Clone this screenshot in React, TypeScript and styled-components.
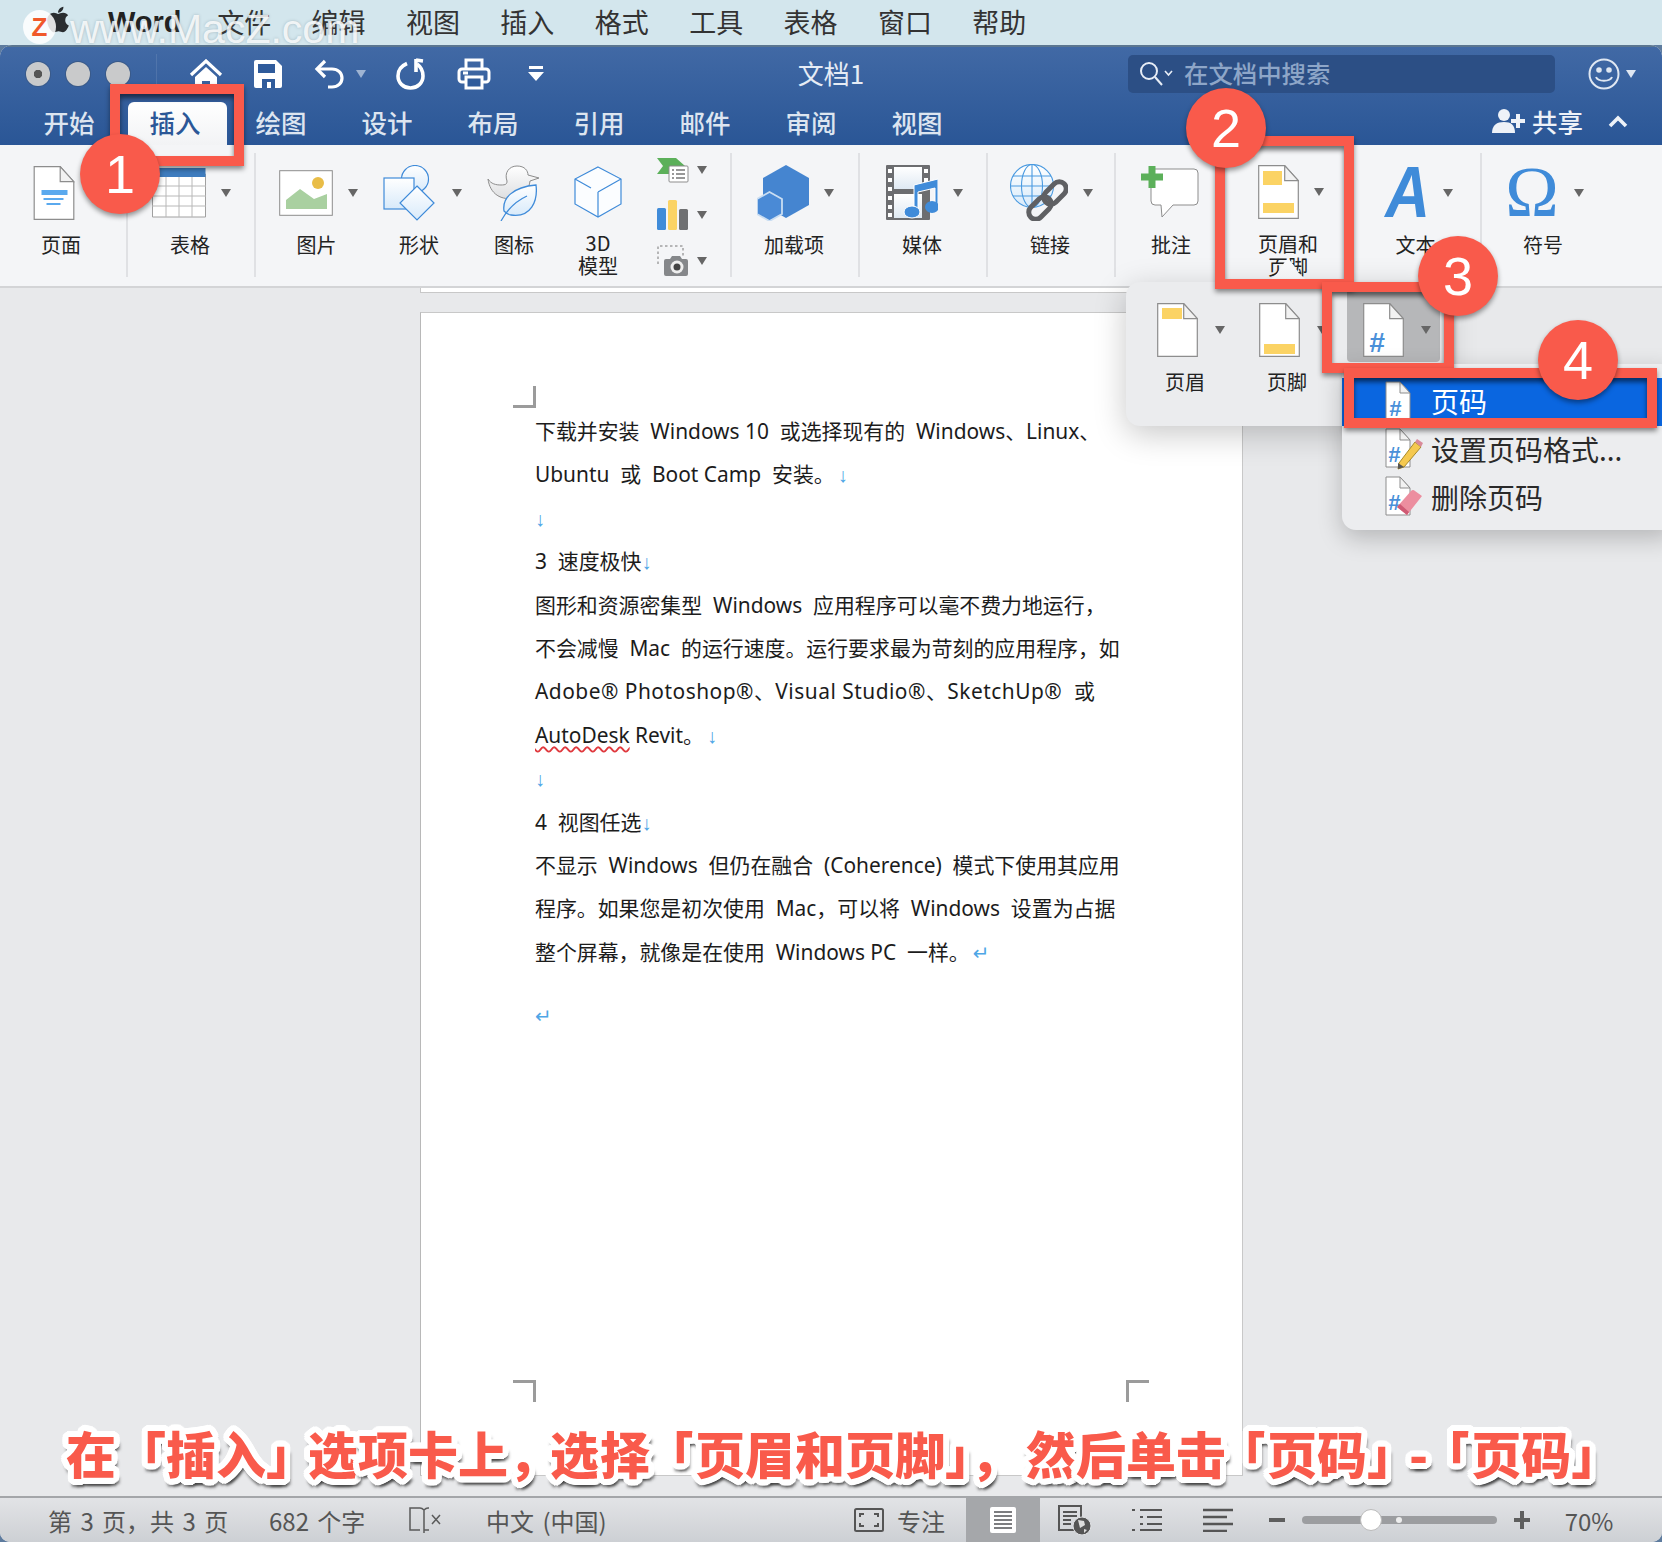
import React from 'react'
import styled, { createGlobalStyle } from 'styled-components'
import { FaApple } from 'react-icons/fa'

const cjk = `"Noto Sans CJK SC", "Noto Sans", sans-serif`
const docFont = `"Noto Sans", "Noto Sans CJK SC", sans-serif`
const red = '#f95a4b'

const Global = createGlobalStyle`
  html, body { margin: 0; padding: 0; background: #5d7b9e; }
  * { box-sizing: border-box; }
`

const Screen = styled.div`
  position: relative;
  width: 1662px;
  height: 1542px;
  overflow: hidden;
  display: flex;
  flex-direction: column;
  font-family: ${cjk};
`

const MenuBar = styled.div`
  height: 45px;
  flex: none;
  display: flex;
  align-items: center;
  padding: 0 0 3px 197px;
  background: #d3e6ed;
  color: #333;
  font-size: 27px;
`

const AppName = styled.span`
  position: absolute;
  left: 108px;
  top: 3px;
  font: bold 29px "Liberation Sans", sans-serif;
  line-height: 38px;
  color: #222;
`

const MenuItem = styled.span`
  width: 94.4px;
  text-align: center;
`

const Watermark = styled.span`
  position: absolute;
  left: 70px;
  top: 5px;
  font: 41px/48px "Liberation Sans", sans-serif;
  color: rgba(255, 255, 255, 0.82);
  text-shadow: 0 0 3px rgba(110, 130, 140, 0.45);
`

const LogoDisc = styled.div`
  position: absolute;
  left: 23px;
  top: 10px;
  width: 33px;
  height: 34px;
  border-radius: 50%;
  background: rgba(255, 255, 255, 0.85);
  color: #f0592b;
  font: bold 26px/34px "Liberation Sans", sans-serif;
  text-align: center;
`

const AppleMark = styled(FaApple)`
  position: absolute;
  left: 47px;
  top: 3px;
  width: 22px;
  height: 33px;
  color: #2a2d30;
`

const Frame = styled.div`
  flex: 1;
  display: flex;
  flex-direction: column;
  border-radius: 12px 12px 10px 10px;
  overflow: hidden;
  background: #e8e9eb;
`

const Header = styled.div`
  height: 100px;
  flex: none;
  background: linear-gradient(#4169a5, #2a5696);
  border-top: 2px solid #5b7690;
`

const TitleBar = styled.div`
  height: 53px;
  display: flex;
  align-items: center;
  padding-left: 26px;
`

const Lights = styled.div`
  display: flex;
  align-items: center;
  gap: 16px;
  width: 131px;
  height: 40px;
  margin-right: 18px;
  border-right: 1px solid rgba(255, 255, 255, 0.1);
`

const Light = styled.span<{ $dot?: boolean }>`
  width: 24px;
  height: 24px;
  border-radius: 50%;
  background: ${(p) =>
    p.$dot ? 'radial-gradient(circle, #555 0 4px, #c9cacb 4.5px)' : '#c9cacb'};
  box-shadow: 0 0 0 1px #3a5a88;
`

const QatCell = styled.div<{ $w: number }>`
  width: ${(p) => p.$w}px;
  height: 40px;
  display: flex;
  align-items: center;
  justify-content: center;
  gap: 10px;
`

const DocTitle = styled.div`
  width: 528px;
  padding-bottom: 3px;
  text-align: center;
  color: #e6ecf5;
  font-size: 26px;
`

const SearchBox = styled.div`
  width: 427px;
  height: 38px;
  margin-left: 33px;
  display: flex;
  align-items: center;
  gap: 11px;
  padding-left: 11px;
  border-radius: 5px;
  background: #2c4f85;
  color: #8ea6c8;
  font-size: 24.4px;
  font-weight: 500;
`

const SearchLabel = styled.span`
  padding-bottom: 3px;
`

const SmileCell = styled.div`
  margin-left: 33px;
  display: flex;
  align-items: center;
  gap: 6px;
`

const Tabs = styled.div`
  height: 45px;
  display: flex;
  align-items: center;
  padding-left: 16px;
  padding-right: 34px;
  color: #dde5f0;
  font-size: 25.5px;
  font-weight: 500;
`

const Tab = styled.div<{ $active?: boolean }>`
  position: relative;
  width: 106px;
  height: 45px;
  line-height: 43px;
  text-align: center;
  color: ${(p) => (p.$active ? '#2b5797' : 'inherit')};
  z-index: 0;
  &::before {
    content: '';
    display: ${(p) => (p.$active ? 'block' : 'none')};
    position: absolute;
    left: 6px;
    right: 1px;
    top: 2px;
    bottom: 0;
    z-index: -1;
    border-radius: 6px 6px 0 0;
    background: linear-gradient(#fff, #f2f3f5);
  }
`

const Share = styled.div`
  margin-left: auto;
  display: flex;
  align-items: center;
  padding-bottom: 4px;
  color: #eef2f8;
`

const ShareLabel = styled.span`
  margin: 0 25px 0 6px;
`

const Ribbon = styled.div`
  height: 143px;
  flex: none;
  display: flex;
  background: #f4f5f7;
  border-bottom: 2px solid #d3d4d6;
`

const Group = styled.div<{ $w: number; $last?: boolean }>`
  width: ${(p) => p.$w}px;
  margin: 8px 0 9px;
  display: flex;
  border-right: ${(p) => (p.$last ? 'none' : '2px solid #e0e1e4')};
`

const ToolButton = styled.div<{ $w: number }>`
  width: ${(p) => p.$w}px;
  flex: none;
  display: flex;
  flex-direction: column;
  align-items: center;
  padding-top: 12px;
`

const IconRow = styled.div<{ $nudge?: number }>`
  height: 55px;
  display: flex;
  align-items: center;
  gap: 15px;
  margin-left: ${(p) => p.$nudge ?? 0}px;
`

const ToolLabel = styled.div`
  margin-top: 13px;
  font-size: 20px;
  line-height: 23px;
  color: #222;
  text-align: center;
  white-space: pre-line;
`

const Caret = styled.span<{ $tone?: string }>`
  flex: none;
  width: 0;
  height: 0;
  border-left: 5.5px solid transparent;
  border-right: 5.5px solid transparent;
  border-top: 8px solid ${(p) => p.$tone ?? '#666'};
`

const MiniColumn = styled.div`
  width: 103px;
  padding-left: 28px;
  display: flex;
  flex-direction: column;
  gap: 12.5px;
`

const MiniRow = styled.div`
  height: 34px;
  display: flex;
  align-items: center;
  gap: 8px;
`

const LetterA = styled.span`
  display: block;
  width: 46px;
  text-align: center;
  color: #3f8bd9;
  font: italic 700 72px/55px "Liberation Sans", sans-serif;
  transform: scaleX(0.86);
`

const LetterOmega = styled.span`
  color: #3f8bd9;
  font: 72px/55px "Liberation Serif", serif;
`

const Workspace = styled.div`
  flex: 1;
  display: flex;
  flex-direction: column;
  padding: 0 0 20px 420px;
  background: #e8e9eb;
`

const PrevPage = styled.div`
  width: 823px;
  height: 5px;
  flex: none;
  background: #fff;
  border-left: 1px solid #c8c8c8;
  border-right: 1px solid #c8c8c8;
  border-bottom: 1px solid #c8c8c8;
`

const Page = styled.div`
  width: 823px;
  flex: 1;
  margin-top: 19px;
  padding: 73px 93px 73px 92px;
  display: flex;
  flex-direction: column;
  background: #fff;
  border: 1px solid #c8c8c8;
  border-left-color: #b8b8b8;
`

const CropRow = styled.div<{ $bottom?: boolean }>`
  display: flex;
  justify-content: space-between;
  margin-top: ${(p) => (p.$bottom ? 'auto' : '0')};
`

const CropMark = styled.span<{ $side: 'top' | 'bottomLeft' | 'bottomRight' }>`
  width: 23px;
  height: 22px;
  border: 0 solid #9b9b9b;
  border-bottom-width: ${(p) => (p.$side === 'top' ? 3 : 0)}px;
  border-top-width: ${(p) => (p.$side === 'top' ? 0 : 3)}px;
  border-right-width: ${(p) => (p.$side === 'bottomRight' ? 0 : 3)}px;
  border-left-width: ${(p) => (p.$side === 'bottomRight' ? 3 : 0)}px;
`

const Body = styled.div`
  margin: 2px 0 0 22px;
  font-family: ${docFont};
  font-size: 20.9px;
  line-height: 43.4px;
  color: #1c1c1c;
  white-space: pre;
`

const Line = styled.div<{ $gap?: number; $track?: number }>`
  height: 43.4px;
  margin-top: ${(p) => p.$gap ?? 0}px;
  letter-spacing: ${(p) => p.$track ?? 0}px;
`

const Mark = styled.span<{ $bare?: boolean }>`
  margin-left: ${(p) => (p.$bare ? 0 : 3)}px;
  color: #4ea6e6;
  font-family: "Liberation Sans", "DejaVu Sans", sans-serif;
  font-size: 20px;
`

const Squiggle = styled.span`
  text-decoration: underline wavy #e0393e;
  text-decoration-thickness: 1.5px;
  text-underline-offset: 3px;
`

const Popover = styled.div`
  position: absolute;
  left: 1126px;
  top: 282px;
  width: 319px;
  height: 144px;
  padding-left: 8px;
  display: flex;
  background: #ebecee;
  border-radius: 14px;
  box-shadow: 0 8px 32px rgba(0, 0, 0, 0.22);
  &::before {
    content: '';
    position: absolute;
    left: 137px;
    top: -24px;
    width: 50px;
    height: 25px;
    background: linear-gradient(#fbfbfc, #eeeff1);
    clip-path: polygon(50% 0, 60% 25%, 72% 62%, 84% 84%, 100% 100%, 0 100%, 16% 84%, 28% 62%, 40% 25%);
  }
`

const PopButton = styled.div<{ $w: number; $active?: boolean }>`
  width: ${(p) => p.$w}px;
  height: ${(p) => (p.$active ? 80 : 144)}px;
  margin-left: ${(p) => (p.$active ? 9 : 0)}px;
  padding: 21px 0 0 ${(p) => (p.$active ? 16 : 23)}px;
  background: ${(p) => (p.$active ? '#b6b7b9' : 'transparent')};
  border-radius: 0 0 4px 4px;
`

const PopIcons = styled.div`
  display: flex;
  align-items: center;
  gap: 17px;
`

const PopLabel = styled.div`
  margin: 11px 0 0 -23px;
  font-size: 20px;
  line-height: 27px;
  color: #222;
  text-align: center;
`

const DropMenu = styled.div`
  position: absolute;
  left: 1342px;
  top: 364px;
  width: 330px;
  height: 166px;
  padding-top: 14px;
  background: #ecedef;
  border-radius: 0 0 0 14px;
  box-shadow: 0 8px 24px rgba(0, 0, 0, 0.22);
`

const DropRow = styled.div<{ $selected?: boolean }>`
  height: 48px;
  display: flex;
  align-items: center;
  gap: 8px;
  padding: 0 0 2px 43px;
  font-size: 28px;
  background: ${(p) => (p.$selected ? '#0a66e0' : 'transparent')};
  color: ${(p) => (p.$selected ? '#fff' : '#2a2a2a')};
`

const RedBox = styled.div<{ $x: number; $y: number; $w: number; $h: number }>`
  position: absolute;
  left: ${(p) => p.$x}px;
  top: ${(p) => p.$y}px;
  width: ${(p) => p.$w}px;
  height: ${(p) => p.$h}px;
  border: 10px solid ${red};
  box-shadow: 0 3px 5px rgba(0, 0, 0, 0.45), inset 0 4px 5px rgba(0, 0, 0, 0.55);
`

const Badge = styled.div<{ $x: number; $y: number }>`
  position: absolute;
  left: ${(p) => p.$x}px;
  top: ${(p) => p.$y}px;
  width: 80px;
  height: 80px;
  border-radius: 50%;
  background: ${red};
  box-shadow: 0 3px 5px rgba(0, 0, 0, 0.4);
  color: #fff;
  font: 54px/80px "Liberation Sans", sans-serif;
  text-align: center;
`

const outline = (() => {
  const parts: string[] = []
  for (let i = 0; i < 24; i++) {
    const a = (i / 24) * Math.PI * 2
    parts.push(`${(Math.cos(a) * 6).toFixed(1)}px ${(Math.sin(a) * 6).toFixed(1)}px 0 #fff`)
  }
  parts.push('3px 8px 3px rgba(60,60,60,.8)', '-2px 8px 3px rgba(60,60,60,.65)', '6px 6px 3px rgba(60,60,60,.65)')
  return parts.join(',')
})()

const Caption = styled.div`
  position: absolute;
  left: 66px;
  top: 1417px;
  font-size: 50px;
  line-height: 70px;
  font-weight: 900;
  color: ${red};
  white-space: pre;
  text-shadow: ${outline};
`

const Pull = styled.span<{ $px: number }>`
  margin-left: ${(p) => p.$px}px;
`

const StatusBar = styled.div`
  height: 46px;
  flex: none;
  display: flex;
  align-items: center;
  padding-left: 48px;
  background: linear-gradient(#e2e3e6, #cdd0d4);
  border-top: 2px solid #a4a6a9;
  color: #555;
  font-size: 24px;
  word-spacing: 3px;
`

const StatusCell = styled.div<{ $w: number; $active?: boolean; $center?: boolean }>`
  width: ${(p) => p.$w}px;
  height: 100%;
  flex: none;
  display: flex;
  align-items: center;
  justify-content: ${(p) => (p.$center ? 'center' : 'flex-start')};
  white-space: pre;
  background: ${(p) => (p.$active ? '#a5a7aa' : 'transparent')};
`

const ZoomTrack = styled.div`
  position: relative;
  width: 195px;
  height: 8px;
  flex: none;
  border-radius: 4px;
  background: #9c9da0;
`

const ZoomDot = styled.span`
  position: absolute;
  left: 94px;
  top: 1px;
  width: 6px;
  height: 6px;
  border-radius: 50%;
  background: #eee;
`

const ZoomKnob = styled.span`
  position: absolute;
  left: 58px;
  top: -7px;
  width: 22px;
  height: 22px;
  border-radius: 50%;
  background: #fff;
  border: 1px solid #bbb;
`

const blue = '#4a90d9'
const yellow = '#fbd364'

type Sized = { w?: number; h?: number; children?: React.ReactNode }

const Tint = ({ id, to = '#d8eafa' }: { id: string; to?: string }) => (
  <defs>
    <linearGradient id={id} x1="0" y1="0" x2="0" y2="1">
      <stop offset="0" stopColor="#fff" />
      <stop offset="1" stopColor={to} />
    </linearGradient>
  </defs>
)

const Doc = ({ w = 41, h = 54, children }: Sized) => (
  <svg width={w} height={h} viewBox="0 0 41 54">
    <path d="M.7.7h26l13.6 15v37.6H.7z" fill="#fff" stroke="#8d8d8d" strokeWidth="1.2" />
    {children}
    <path d="M26.7.7v15h13.6z" fill="#f2f2f2" stroke="#8d8d8d" strokeWidth="1.2" />
  </svg>
)

const HashText = ({ size = 24, x = 5, y = 49 }: { size?: number; x?: number; y?: number }) => (
  <text x={x} y={y} fontFamily="Liberation Sans" fontStyle="italic" fontWeight="700" fontSize={size} fill={blue}>
    #
  </text>
)

const HomeIcon = () => (
  <svg width="34" height="30" viewBox="0 0 34 30">
    <path d="M2 16 17 2l15 14" fill="none" stroke="#fff" strokeWidth="3.2" />
    <path d="M6 18 17 8l11 10v12h-7v-8h-8v8H6z" fill="#fff" />
  </svg>
)

const SaveIcon = () => (
  <svg width="28" height="28" viewBox="0 0 28 28">
    <path d="M2 0h20l6 6v20a2 2 0 0 1-2 2H2a2 2 0 0 1-2-2V2a2 2 0 0 1 2-2z" fill="#fff" />
    <path d="M4 4h17v9H4z" fill="#2f5b9b" />
    <path d="M8 19h13v9H8z" fill="#2f5b9b" />
    <path d="M13 22h4v6h-4z" fill="#fff" />
  </svg>
)

const UndoIcon = () => (
  <svg width="32" height="30" viewBox="0 0 32 30" fill="none" stroke="#fff" strokeWidth="3.2">
    <path d="M11 2 3 10l8 8" />
    <path d="M4 10h14c6 0 10 4 10 9s-4 9-10 9h-4" />
  </svg>
)

const RedoIcon = () => (
  <svg width="30" height="32" viewBox="0 0 30 32" fill="none" stroke="#fff" strokeWidth="3.6">
    <path d="M11 5.500C5 8 2 13 2 18c0 7 5.600 12 12.500 12S27 25 27 18c0-5-2-9-6-12" />
    <path d="M20 1v13" />
    <path d="m20 2 7 1" />
  </svg>
)

const PrintIcon = () => (
  <svg width="34" height="32" viewBox="0 0 34 32" fill="none" stroke="#fff" strokeWidth="3">
    <path d="M9 11V2h16v9" />
    <rect x="2" y="11" width="30" height="13" rx="3" />
    <path d="M9 19h16v11H9z" fill="#2f5b9b" />
    <path d="M6 15h5" />
  </svg>
)

const CustomizeIcon = () => (
  <svg width="16" height="16" viewBox="0 0 16 16" fill="#fff">
    <path d="M1 0h14v3H1zM0 6h16l-8 9z" />
  </svg>
)

const SearchGlass = () => (
  <svg width="34" height="26" viewBox="0 0 34 26" fill="none" stroke="#e7edf6" strokeWidth="2">
    <circle cx="10" cy="10" r="8" />
    <path d="m16 16 7 8" />
    <path d="m26 10 3.500 4 3.500-4" strokeWidth="1.600" />
  </svg>
)

const SmileIcon = () => (
  <svg width="32" height="32" viewBox="0 0 32 32" fill="none" stroke="#dfe7f2" strokeWidth="2">
    <circle cx="16" cy="16" r="14.500" />
    <circle cx="11" cy="12" r="1.800" fill="#dfe7f2" />
    <circle cx="21" cy="12" r="1.800" fill="#dfe7f2" />
    <path d="M8 19c2 5 14 5 16 0" />
  </svg>
)

const ShareIcon = () => (
  <svg width="34" height="26" viewBox="0 0 34 26" fill="#eef2f8">
    <circle cx="12" cy="7" r="6" />
    <path d="M0 25c0-8 5-11 12-11s11 3 11 11z" />
    <path d="M24 6h4v5h5v4h-5v5h-4v-5h-5v-4h5z" />
  </svg>
)

const Chevron = () => (
  <svg width="20" height="14" viewBox="0 0 20 14" fill="none" stroke="#eef2f8" strokeWidth="3.600">
    <path d="m2 12 8-8 8 8" />
  </svg>
)

const PageIcon = () => (
  <Doc w={42} h={54}>
    <path d="M8 24h26v5H8z" fill="#5aa9ee" />
    <path d="M10 32h20v2H10zM13 37h14v2H13z" fill="#5aa9ee" />
  </Doc>
)

const TableIcon = () => (
  <svg width="54" height="50" viewBox="0 0 54 50">
    <path d="M.5 6h53v43H.5z" fill="#fff" stroke="#a0a0a0" />
    <path d="M.5 0h53v9H.5z" fill="#3e7cbe" />
    <path d="M0 18h54M0 28h54M0 38h54M14 9v40M27 9v40M40 9v40" stroke="#b8b8b8" />
  </svg>
)

const PictureIcon = () => (
  <svg width="54" height="46" viewBox="0 0 54 46">
    <rect x=".7" y=".7" width="52.600" height="44.600" fill="#fff" stroke="#8d8d8d" />
    <circle cx="39" cy="13" r="6" fill="#e9bd47" />
    <path d="M7 39v-9l14-11 14 10 13-5v15z" fill="#a9d0a0" />
  </svg>
)

const ShapesIcon = () => (
  <svg width="54" height="56" viewBox="0 0 54 56" stroke="#3f8bd9" strokeWidth="1.200">
    <Tint id="shapeTint" />
    <circle cx="32" cy="14" r="13.500" fill="url(#shapeTint)" />
    <rect x="1" y="13" width="30" height="31" fill="url(#shapeTint)" />
    <path d="m34 21 17 17-17 17-17-17z" fill="url(#shapeTint)" />
  </svg>
)

const DuckIcon = () => (
  <svg width="54" height="56" viewBox="0 0 54 56">
    <Tint id="duckTint" to="#dedfe1" />
    <Tint id="leafTint" />
    <path
      d="M1 14c3 5 8 6 13 6 5 0 6-1 6-4-3-8 2-15 10-15s11 5 11 9l11 3-9 3c-1 8-5 14-14 17-15 3-26-4-28-19z"
      fill="url(#duckTint)"
      stroke="#8c8c8c"
    />
    <path
      d="M17 46c-2-13 9-24 32-26 2 16-5 33-25 30-3 0-5-2-7-4z"
      fill="url(#leafTint)"
      stroke="#3f8bd9"
      strokeWidth="1.300"
    />
    <path d="M14 56c6-11 15-20 26-25" stroke="#3f8bd9" strokeWidth="1.300" fill="none" />
  </svg>
)

const CubeIcon = () => (
  <svg width="48" height="52" viewBox="0 0 48 52" fill="#fbfdff" stroke="#3f8bd9" strokeWidth="1.200">
    <path d="M24 1 47 13v25L24 51 1 38V13z" />
    <path d="M1 13 17 22M24 26l23-13M24 26v25" fill="none" />
  </svg>
)

const ListIcon = () => (
  <svg width="32" height="26" viewBox="0 0 32 26">
    <path d="M0 1h19l9 8-9 8H0l6-8z" fill="#5cb05a" />
    <rect x="12" y="9" width="19" height="16" rx="1" fill="#fff" stroke="#8d8d8d" />
    <path d="M15 13h2M19 13h9M15 17h2M19 17h9M15 21h2M19 21h9" stroke="#777" strokeWidth="1.300" />
  </svg>
)

const BarsIcon = () => (
  <svg width="32" height="30" viewBox="0 0 32 30">
    <rect x="0" y="8" width="9" height="22" rx="1.500" fill="#3f8bd9" />
    <rect x="11" y="0" width="9" height="30" rx="1.500" fill="#fbd364" />
    <rect x="22" y="9" width="9" height="21" rx="1.500" fill="#6f7072" />
  </svg>
)

const CameraIcon = () => (
  <svg width="32" height="31" viewBox="0 0 32 31">
    <path d="M1 19V1h25v11" fill="none" stroke="#777" strokeDasharray="2.500 2.500" />
    <path d="M7 16a2 2 0 0 1 2-2h4l2-3h8l2 3h4a2 2 0 0 1 2 2v13a2 2 0 0 1-2 2H9a2 2 0 0 1-2-2z" fill="#85878a" />
    <circle cx="20" cy="22" r="6.500" fill="#eee" />
    <circle cx="20" cy="22" r="3.500" fill="#444" />
  </svg>
)

const AddinIcon = () => (
  <svg width="52" height="56" viewBox="0 0 52 56">
    <path d="M29 0 52 13v27L29 53 6 40V13z" fill="#4585d0" />
    <path d="M12.500 27 25 34v15l-12.500 7L0 49V34z" fill="#4a8ad6" stroke="#c9ddf2" strokeWidth="1.800" />
  </svg>
)

const MediaIcon = () => (
  <svg width="52" height="56" viewBox="0 0 52 56">
    <Tint id="filmTint" to="#dfe9f3" />
    <rect x="0" y="0" width="44" height="55" rx="1" fill="#6c6d70" />
    <rect x="8" y="2" width="28" height="22" fill="url(#filmTint)" />
    <rect x="8" y="29" width="28" height="24" fill="url(#filmTint)" />
    <path d="M2 4h4v4H2zM2 13h4v4H2zM2 22h4v4H2zM2 31h4v4H2zM2 40h4v4H2zM2 48h4v4H2zM38 4h4v4h-4zM38 13h4v4h-4z" fill="#fff" />
    <path d="M28 20 52 14v29h-3V23l-17 4v22h-4z" fill="#3f8bd9" stroke="#fff" />
    <ellipse cx="26" cy="47" rx="8" ry="6" fill="#3f8bd9" stroke="#fff" />
    <ellipse cx="46" cy="42" rx="7" ry="6" fill="#3f8bd9" />
  </svg>
)

const LinkIcon = () => (
  <svg width="58" height="57" viewBox="0 0 58 57">
    <Tint id="globeTint" />
    <g stroke="#4a9ae0" strokeWidth="1.100">
      <circle cx="22" cy="22" r="21.500" fill="url(#globeTint)" />
      <ellipse cx="22" cy="22" rx="10.500" ry="21.500" fill="none" />
      <path d="M.5 22h43M3 12h38M3 32h38M22 .5v43" fill="none" />
    </g>
    <g fill="none" stroke="#5f6063" strokeWidth="5">
      <rect x="38" y="16" width="14" height="26" rx="7" transform="rotate(45 45 29)" />
      <rect x="23" y="31" width="14" height="26" rx="7" transform="rotate(45 30 44)" />
    </g>
  </svg>
)

const CommentIcon = () => (
  <svg width="58" height="54" viewBox="0 0 58 54">
    <path
      d="M10 3h43a4 4 0 0 1 4 4v28a4 4 0 0 1-4 4H32L21 51l-1-12h-6a4 4 0 0 1-4-4z"
      fill="#fff"
      stroke="#8d8d8d"
    />
    <path d="M7.500 0h7v7.500H22v7h-7.500V22h-7v-7.500H0v-7h7.500z" fill="#5cb05a" />
  </svg>
)

const HeaderFooterIcon = () => (
  <Doc>
    <rect x="5" y="6" width="19" height="14" fill={yellow} />
    <rect x="5" y="38" width="31" height="10" fill={yellow} />
  </Doc>
)

const HeaderIcon = () => (
  <Doc>
    <rect x="5" y="5" width="20" height="11" fill={yellow} />
  </Doc>
)

const FooterIcon = () => (
  <Doc>
    <rect x="5" y="41" width="31" height="10" fill={yellow} />
  </Doc>
)

const NumberIcon = () => (
  <Doc>
    <HashText size={28} x={6} y={49} />
  </Doc>
)

const MenuNumberIcon = () => (
  <svg width="38" height="40" viewBox="0 0 38 40">
    <path d="M1 1h14l10 11v27H1z" fill="#fff" stroke="#8d8d8d" />
    <path d="M15 1v11h10z" fill="#f2f2f2" stroke="#8d8d8d" />
    <HashText size={22} x={4} y={35} />
  </svg>
)

const PencilIcon = () => (
  <svg width="38" height="42" viewBox="0 0 38 42">
    <path d="M1 1h14l10 11v27H1z" fill="#fff" stroke="#8d8d8d" />
    <path d="M15 1v11h10z" fill="#f2f2f2" stroke="#8d8d8d" />
    <HashText size={22} x={3} y={34} />
    <path d="M14 35 30 14l6 5-17 20-6 2z" fill="#f5c94f" stroke="#a88a2a" />
    <path d="m30 14 2-3 6 4-2 4z" fill="#d98a9a" />
    <path d="m13 35 6 4-6 2z" fill="#555" />
  </svg>
)

const EraserIcon = () => (
  <svg width="38" height="42" viewBox="0 0 38 42">
    <path d="M1 1h14l10 11v27H1z" fill="#fff" stroke="#8d8d8d" />
    <path d="M15 1v11h10z" fill="#f2f2f2" stroke="#8d8d8d" />
    <HashText size={22} x={3} y={34} />
    <path d="M12 31 26 15a3 3 0 0 1 4 0l7 5-15 19z" fill="#ec8e9f" />
    <path d="m12 31 10 8 2-3-9-8z" fill="#cf5a74" />
  </svg>
)

const BookIcon = () => (
  <svg width="34" height="28" viewBox="0 0 34 28" fill="none" stroke="#5a5a5a" strokeWidth="1.500">
    <path d="M12 24H2V2h10c2 0 3 1 4 2 1-1 2-2 4-2h1M16 4v23M21 24h-5" />
    <path d="m24 9 8 9M32 9l-8 9" />
  </svg>
)

const FocusIcon = () => (
  <svg width="30" height="24" viewBox="0 0 30 24" fill="none" stroke="#555" strokeWidth="2">
    <rect x="1" y="1" width="28" height="22" rx="1.500" />
    <path d="M6 9V6h4M20 6h4v3M24 15v3h-4M10 18H6v-3" />
  </svg>
)

const PrintViewIcon = () => (
  <svg width="28" height="28" viewBox="0 0 28 28">
    <rect x="1" y="1" width="26" height="26" rx="2" fill="#fff" />
    <path d="M5 6h18M5 10h18M5 14h18M5 18h18M5 22h18" stroke="#7c7d80" strokeWidth="2" />
  </svg>
)

const WebViewIcon = () => (
  <svg width="34" height="30" viewBox="0 0 34 30">
    <rect x="1" y="1" width="22" height="24" fill="none" stroke="#555" strokeWidth="2" />
    <path d="M5 7h14M5 11h14M5 15h8M5 19h8" stroke="#555" strokeWidth="2" />
    <circle cx="24" cy="21" r="9" fill="#555" stroke="#e0e1e4" />
    <path d="m20 15 6 1 1 4-5 3zM26 24l3 1-3 3z" fill="#ddd" />
  </svg>
)

const OutlineIcon = () => (
  <svg width="30" height="24" viewBox="0 0 30 24" stroke="#555" strokeWidth="2">
    <path d="M0 2h3M8 2h22M8 9h3M15 9h15M8 16h3M15 16h15M0 22h3M8 22h22" />
  </svg>
)

const DraftIcon = () => (
  <svg width="30" height="24" viewBox="0 0 30 24" stroke="#555" strokeWidth="2.400">
    <path d="M0 2h30M0 9h24M0 16h30M0 23h24" />
  </svg>
)

const ZoomSign = ({ plus }: { plus?: boolean }) => (
  <svg width="18" height="18" viewBox="0 0 18 18" fill="#5e5e5e">
    <path d="M1 7h16v4H1z" />
    {plus && <path d="M7 0h4v18H7z" />}
  </svg>
)

const tabs = ['开始', '插入', '绘图', '设计', '布局', '引用', '邮件', '审阅', '视图']
const menus = ['文件', '编辑', '视图', '插入', '格式', '工具', '表格', '窗口', '帮助']

const Tool = ({
  w,
  label,
  caret = true,
  nudge,
  children,
}: {
  w: number
  label: string
  caret?: boolean
  nudge?: number
  children: React.ReactNode
}) => (
  <ToolButton $w={w}>
    <IconRow $nudge={nudge}>
      {children}
      {caret && <Caret />}
    </IconRow>
    <ToolLabel>{label}</ToolLabel>
  </ToolButton>
)

const Down = () => <Mark>↓</Mark>
const Ret = () => <Mark>↵</Mark>

export default function App() {
  return (
    <Screen>
      <Global />
      <MenuBar>
        {menus.map((m) => (
          <MenuItem key={m}>{m}</MenuItem>
        ))}
      </MenuBar>
      <AppName>Word</AppName>
      <AppleMark />
      <Watermark>www.MacZ.com</Watermark>
      <LogoDisc>Z</LogoDisc>

      <Frame>
        <Header>
          <TitleBar>
            <Lights>
              <Light $dot />
              <Light />
              <Light />
            </Lights>
            <QatCell $w={62}><HomeIcon /></QatCell>
            <QatCell $w={62}><SaveIcon /></QatCell>
            <QatCell $w={81}><UndoIcon /><Caret $tone="#9fb4d2" /></QatCell>
            <QatCell $w={62}><RedoIcon /></QatCell>
            <QatCell $w={63}><PrintIcon /></QatCell>
            <QatCell $w={62}><CustomizeIcon /></QatCell>
            <DocTitle>文档1</DocTitle>
            <SearchBox>
              <SearchGlass />
              <SearchLabel>在文档中搜索</SearchLabel>
            </SearchBox>
            <SmileCell>
              <SmileIcon />
              <Caret $tone="#dfe7f2" />
            </SmileCell>
          </TitleBar>
          <Tabs>
            {tabs.map((t) => (
              <Tab key={t} $active={t === '插入'}>{t}</Tab>
            ))}
            <Share>
              <ShareIcon />
              <ShareLabel>共享</ShareLabel>
              <Chevron />
            </Share>
          </Tabs>
        </Header>

        <Ribbon>
          <Group $w={128}>
            <Tool w={122} label="页面" caret={false} nudge={-14}><PageIcon /></Tool>
          </Group>
          <Group $w={128}>
            <Tool w={124} label="表格" nudge={3}><TableIcon /></Tool>
          </Group>
          <Group $w={476}>
            <Tool w={121} label="图片" nudge={4}><PictureIcon /></Tool>
            <Tool w={84} label="形状" nudge={6}><ShapesIcon /></Tool>
            <Tool w={106} label="图标" caret={false}><DuckIcon /></Tool>
            <Tool w={62} label={'3D\n模型'} caret={false}><CubeIcon /></Tool>
            <MiniColumn>
              <MiniRow><ListIcon /><Caret /></MiniRow>
              <MiniRow><BarsIcon /><Caret /></MiniRow>
              <MiniRow><CameraIcon /><Caret /></MiniRow>
            </MiniColumn>
          </Group>
          <Group $w={128}>
            <Tool w={124} label="加载项" nudge={2}><AddinIcon /></Tool>
          </Group>
          <Group $w={128}>
            <Tool w={124} label="媒体" nudge={4}><MediaIcon /></Tool>
          </Group>
          <Group $w={128}>
            <Tool w={124} label="链接" nudge={2}><LinkIcon /></Tool>
          </Group>
          <Group $w={366}>
            <Tool w={110} label="批注" caret={false} nudge={-3}><CommentIcon /></Tool>
            <Tool w={124} label={'页眉和\n页脚'} nudge={6}><HeaderFooterIcon /></Tool>
            <Tool w={131} label="文本" nudge={4}><LetterA>A</LetterA></Tool>
          </Group>
          <Group $w={122} $last>
            <Tool w={122} label="符号" nudge={3}><LetterOmega>Ω</LetterOmega></Tool>
          </Group>
        </Ribbon>

        <Workspace>
          <PrevPage />
          <Page>
            <CropRow>
              <CropMark $side="top" />
            </CropRow>
            <Body>
              <Line>下载并安装  Windows 10  或选择现有的  Windows、Linux、</Line>
              <Line>Ubuntu  或  Boot Camp  安装。<Down /></Line>
              <Line><Mark $bare>↓</Mark></Line>
              <Line>3  速度极快<Mark $bare>↓</Mark></Line>
              <Line>图形和资源密集型  Windows  应用程序可以毫不费力地运行，</Line>
              <Line>不会减慢  Mac  的运行速度。运行要求最为苛刻的应用程序，如</Line>
              <Line $track={0.5}>Adobe® Photoshop®、Visual Studio®、SketchUp®  或</Line>
              <Line><Squiggle>AutoDesk</Squiggle> Revit。<Down /></Line>
              <Line><Mark $bare>↓</Mark></Line>
              <Line>4  视图任选<Mark $bare>↓</Mark></Line>
              <Line>不显示  Windows  但仍在融合  (Coherence)  模式下使用其应用</Line>
              <Line>程序。如果您是初次使用  Mac，可以将  Windows  设置为占据</Line>
              <Line>整个屏幕，就像是在使用  Windows PC  一样。<Ret /></Line>
              <Line $gap={20}><Mark $bare>↵</Mark></Line>
            </Body>
            <CropRow $bottom>
              <CropMark $side="bottomLeft" />
              <CropMark $side="bottomRight" />
            </CropRow>
          </Page>
        </Workspace>

        <StatusBar>
          <StatusCell $w={221}>第 3 页，共 3 页</StatusCell>
          <StatusCell $w={139}>682 个字</StatusCell>
          <StatusCell $w={78}><BookIcon /></StatusCell>
          <StatusCell $w={368}>中文 (中国)</StatusCell>
          <StatusCell $w={43}><FocusIcon /></StatusCell>
          <StatusCell $w={69}>专注</StatusCell>
          <StatusCell $w={74} $active $center><PrintViewIcon /></StatusCell>
          <StatusCell $w={70} $center><WebViewIcon /></StatusCell>
          <StatusCell $w={73} $center><OutlineIcon /></StatusCell>
          <StatusCell $w={69} $center><DraftIcon /></StatusCell>
          <StatusCell $w={50} $center><ZoomSign /></StatusCell>
          <ZoomTrack>
            <ZoomDot />
            <ZoomKnob />
          </ZoomTrack>
          <StatusCell $w={50} $center><ZoomSign plus /></StatusCell>
          <StatusCell $w={84} $center>70%</StatusCell>
        </StatusBar>
      </Frame>

      <Popover>
        <PopButton $w={102}>
          <PopIcons><HeaderIcon /><Caret /></PopIcons>
          <PopLabel>页眉</PopLabel>
        </PopButton>
        <PopButton $w={102}>
          <PopIcons><FooterIcon /><Caret /></PopIcons>
          <PopLabel>页脚</PopLabel>
        </PopButton>
        <PopButton $w={93} $active>
          <PopIcons><NumberIcon /><Caret /></PopIcons>
        </PopButton>
      </Popover>
      <DropMenu>
        <DropRow $selected><MenuNumberIcon />页码</DropRow>
        <DropRow><PencilIcon />设置页码格式...</DropRow>
        <DropRow><EraserIcon />删除页码</DropRow>
      </DropMenu>

      <RedBox $x={110} $y={84} $w={134} $h={82} />
      <RedBox $x={1215} $y={136} $w={139} $h={153} />
      <RedBox $x={1322} $y={282} $w={132} $h={91} />
      <RedBox $x={1344} $y={368} $w={313} $h={60} />
      <Badge $x={80} $y={134}>1</Badge>
      <Badge $x={1186} $y={88}>2</Badge>
      <Badge $x={1418} $y={236}>3</Badge>
      <Badge $x={1538} $y={320}>4</Badge>

      <Caption>
        在「插入」<Pull $px={-8}>选</Pull>项卡上，<Pull $px={-8}>选</Pull>择<Pull $px={-5}>「</Pull>页眉和页脚」，<Pull $px={6}>然</Pull>后单击<Pull $px={-9}>「</Pull>页码」<Pull $px={-8}>-</Pull><Pull $px={-7}>「</Pull>页码」
      </Caption>
    </Screen>
  )
}
